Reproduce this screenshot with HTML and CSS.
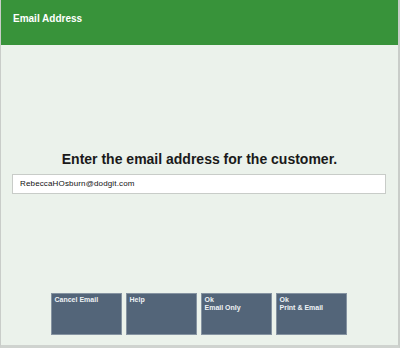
FILE: index.html
```html
<!DOCTYPE html>
<html>
<head>
<meta charset="utf-8">
<link rel="stylesheet" href="styles.css">
</head>
<body>
<div class="frame">
  <div class="header">Email Address</div>
  <div class="main">
    <div class="prompt">Enter the email address for the customer.</div>
    <div class="field">RebeccaHOsburn@dodgit.com</div>
    <div class="buttons">
      <div class="btn">Cancel Email</div>
      <div class="btn">Help</div>
      <div class="btn">Ok<br>Email Only</div>
      <div class="btn">Ok<br>Print &amp; Email</div>
    </div>
  </div>
</div>
</body>
</html>
```
FILE: styles.css
```css
html, body {
  margin: 0;
  padding: 0;
}
body {
  font-family: "Liberation Sans", Arial, sans-serif;
  background: #ebf2eb;
}
.frame {
  width: 400px;
  height: 348px;
  box-sizing: border-box;
  border-left: 1px solid #c9cdc9;
  border-right: 2px solid #c9cdc9;
  border-bottom: 3px solid #cfd3cf;
  background: #ebf2eb;
  display: flex;
  flex-direction: column;
}
.header {
  height: 45px;
  box-sizing: border-box;
  background: #38933a;
  color: #ffffff;
  font-weight: bold;
  font-size: 10px;
  line-height: 12px;
  padding: 13px 0 0 12px;
}
.main {
  flex: 1;
  display: flex;
  flex-direction: column;
}
.prompt {
  margin-top: 106px;
  text-align: center;
  font-weight: bold;
  font-size: 14px;
  line-height: 16px;
  color: #1a1a1a;
}
.field {
  margin: 7px 12px 0 11px;
  height: 20px;
  box-sizing: border-box;
  background: #ffffff;
  border: 1px solid #c8ccc8;
  padding-left: 7px;
  font-size: 8px;
  letter-spacing: 0.15px;
  line-height: 18px;
  color: #111;
}
.buttons {
  margin-top: 99px;
  margin-right: 2px;
  display: flex;
  justify-content: center;
  gap: 4px;
}
.btn {
  width: 71px;
  height: 42px;
  box-sizing: border-box;
  background: #536579;
  border: 1px solid #8593a1;
  color: #eef2f5;
  font-weight: bold;
  font-size: 7px;
  line-height: 8px;
  padding: 2px 0 0 3px;
}
```
